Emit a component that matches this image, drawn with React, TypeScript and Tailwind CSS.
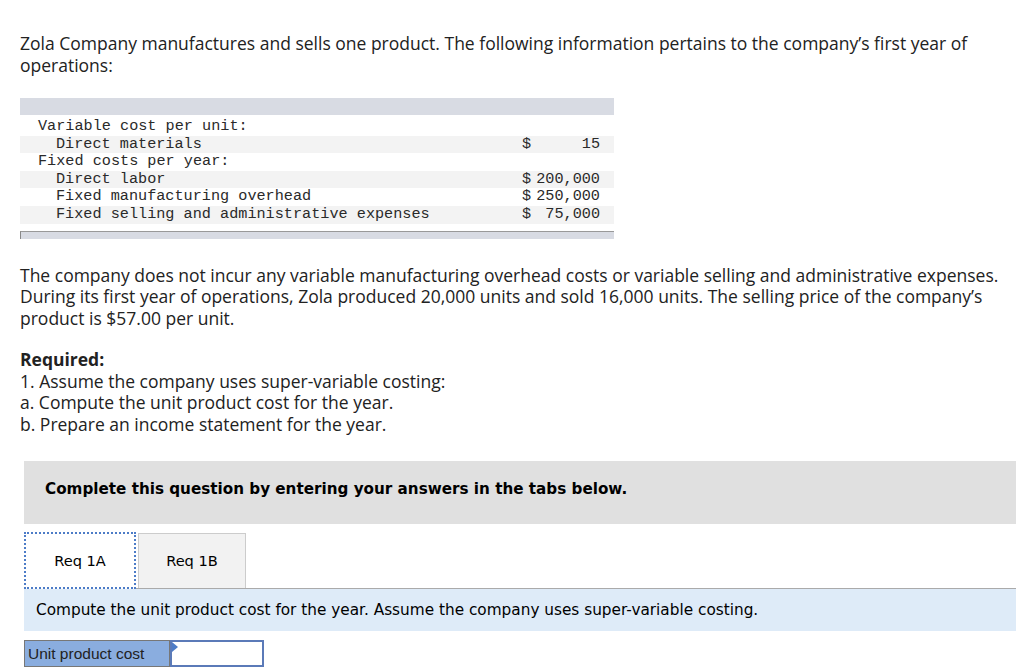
import React from "react";

const rows: { label: string; indent: boolean; cur?: string; value?: string }[] = [
  { label: "Variable cost per unit:", indent: false },
  { label: "Direct materials", indent: true, cur: "$", value: "15" },
  { label: "Fixed costs per year:", indent: false },
  { label: "Direct labor", indent: true, cur: "$", value: "200,000" },
  { label: "Fixed manufacturing overhead", indent: true, cur: "$", value: "250,000" },
  { label: "Fixed selling and administrative expenses", indent: true, cur: "$", value: "75,000" },
];

const body = "font-['Open_Sans','Lato',sans-serif] text-[17.5px] leading-[21.5px] text-[#222]";
const verdana = "font-['DejaVu_Sans','Verdana',sans-serif]";

export default function App() {
  return (
    <div className="min-h-[672px] w-full bg-white pl-[20px] pr-[8px] pt-[33px]">
      <p className={body}>
        Zola Company manufactures and sells one product. The following information pertains to the
        company’s first year of operations:
      </p>

      <div className="mt-[22px] w-[594px] font-['Liberation_Mono','Courier_New',monospace] text-[15.2px] leading-[17.6px] text-[#2a2a2a]">
        <div className="h-[17px] bg-[#d8dbe3]" />
        <div className="pt-[3px]">
          {rows.map((r, i) => (
            <div
              key={r.label}
              className={`flex h-[17.6px] items-center ${i % 2 === 1 ? "bg-[#f3f3f3]" : "bg-white"}`}
            >
              <span className={`whitespace-pre ${r.indent ? "pl-[36px]" : "pl-[18px]"}`}>{r.label}</span>
              <span className="ml-auto flex w-[92px] items-center pr-[14px]">
                <span className="w-[15px]">{r.cur ?? ""}</span>
                <span className="ml-auto whitespace-pre">{r.value ?? ""}</span>
              </span>
            </div>
          ))}
        </div>
        <div className="mt-[7px] h-[8px] border-l border-t border-l-[#888] border-t-[#999] bg-[#d8dbe3]" />
      </div>

      <p className={`${body} mt-[26px]`}>
        The company does not incur any variable manufacturing overhead costs or variable selling and
        administrative expenses. During its first year of operations, Zola produced 20,000 units and
        sold 16,000 units. The selling price of the company’s product is $57.00 per unit.
      </p>

      <div className={`${body} mt-[20px]`}>
        <p className="font-bold">Required:</p>
        <p>1. Assume the company uses super-variable costing:</p>
        <p>a. Compute the unit product cost for the year.</p>
        <p>b. Prepare an income statement for the year.</p>
      </div>

      <div className="ml-[4px] mt-[26px]">
        <div className={`${verdana} flex h-[63px] items-center bg-[#e0e0e0] pb-[7px] pl-[21px] text-[15.2px] font-bold text-black`}>
          Complete this question by entering your answers in the tabs below.
        </div>

        <div className={`${verdana} mt-[8px] flex h-[57px] items-stretch border-b border-b-[#aaa] text-[14.6px] text-black`}>
          <div className="-mb-px flex w-[112px] items-center justify-center border-2 border-dotted border-[#4d7cc7] bg-white">
            Req 1A
          </div>
          <div className="ml-[2px] mt-px flex w-[108px] items-center justify-center border border-b-0 border-[#ccc] bg-[#f2f2f2]">
            Req 1B
          </div>
        </div>

        <div className={`${verdana} flex h-[42px] items-center bg-[#deebf8] pl-[12px] text-[15.3px] text-black`}>
          Compute the unit product cost for the year. Assume the company uses super-variable costing.
        </div>

        <div className="mt-[9px] flex h-[27px] w-[240px] font-['Liberation_Sans','Arial',sans-serif] text-[15.5px] text-[#222]">
          <div className="flex w-[146px] items-center border border-[#777] bg-[#8aaddf] pl-[3px]">
            Unit product cost
          </div>
          <div className="relative w-[94px] border-2 border-[#5b7ab8] bg-white">
            <span className="absolute left-0 top-0 h-0 w-0 border-b-[5px] border-l-[6px] border-t-[5px] border-b-transparent border-l-[#4d7cc7] border-t-transparent" />
          </div>
        </div>
      </div>
    </div>
  );
}
